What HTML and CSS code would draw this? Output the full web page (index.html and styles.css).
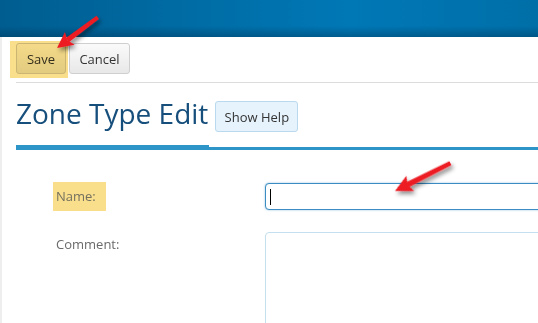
FILE: index.html
```html
<!DOCTYPE html>
<html lang="en">
<head>
    <meta charset="UTF-8">
    <meta name="viewport" content="width=device-width, initial-scale=1.0">
    <title>Zone Type Edit</title>
    <link rel="stylesheet" href="styles.css">
</head>
<body>

    <div class="topbar"></div>

    <div class="page">
        <!-- toolbar -->
        <div class="toolbar">
            <button class="btn" id="saveBtn">Save</button>
            <button class="btn" id="cancelBtn">Cancel</button>
            <span class="mark mark-save"></span>
        </div>

        <div class="title-row">
            <h1>Zone Type Edit</h1>
            <button class="btn btn-help">Show Help</button>
        </div>

        <form class="edit-form">
            <div class="form-row">
                <label class="form-label" for="zoneName"><span class="mark-text">Name:</span></label>
                <div class="field">
                    <input type="text" id="zoneName" class="text-input">
                    <span class="caret"></span>
                </div>
            </div>
            <div class="form-row">
                <label class="form-label form-label-top" for="zoneComment">Comment:</label>
                <div class="field">
                    <textarea id="zoneComment" class="text-area"></textarea>
                </div>
            </div>
        </form>
    </div>

    <!-- annotation arrows -->
    <svg class="arrows" width="538" height="323" viewBox="0 0 538 323">
        <defs>
            <filter id="shadow" x="-50%" y="-50%" width="200%" height="200%">
                <feDropShadow dx="2" dy="3" stdDeviation="2" flood-color="#000" flood-opacity="0.45"/>
            </filter>
        </defs>
        <g filter="url(#shadow)" fill="#ec1c24">
            <g transform="translate(57 48) rotate(143)">
                <polygon points="0,0 -16,-8 -13,0 -16,8"/>
                <polygon points="-13,-2.6 -51,-2 -51,2 -13,2.6"/>
            </g>
            <g transform="translate(395 191) rotate(153.4)">
                <polygon points="0,0 -17,-8.5 -14,0 -17,8.5"/>
                <polygon points="-14,-2.8 -62,-2.2 -62,2.2 -14,2.8"/>
            </g>
        </g>
    </svg>

</body>
</html>
```

FILE: styles.css
```css
body { margin: 0; font-family: "Open Sans", "Noto Sans", sans-serif; background: #fff; overflow: hidden; }
.topbar { height: 37px; background: linear-gradient(to bottom, rgba(0,0,0,0) 70%, rgba(0,40,70,0.35) 100%), linear-gradient(to right, #005d90 0%, #0070aa 45%, #0078b6 65%, #006fa8 100%); }
.page { border-left: 2px solid #eeeeee; padding-left: 14px; min-height: 290px; position: relative; }

.toolbar { display: flex; gap: 3px; padding: 6px 0 8px; border-bottom: 1px solid #dcdcdc; }
.btn { font-family: inherit; font-size: 13px; color: #333; background: linear-gradient(#fafafa, #e8e8e8); border: 1px solid #cfcfcf; border-radius: 3px; height: 31px; padding: 0 12px; cursor: pointer; }
#saveBtn { width: 50px; padding: 0; }
#cancelBtn { width: 61px; padding: 0; }
.mark { position: absolute; background: #f9df8c; mix-blend-mode: multiply; }
.mark-save { left: 8px; top: 4px; width: 58px; height: 37px; }

.title-row { display: flex; align-items: flex-start; gap: 6px; margin-top: 12px; border-bottom: 3px solid #2e95c8; }
h1 { margin: 0 0 -3px; font-size: 28px; line-height: 36px; font-weight: 400; color: #174f7c; padding: 0 1px 14px 0; border-bottom: 5px solid #2e95c8; }
.btn-help { margin-top: 6px; background: #e6f3fc; border-color: #b9d9ef; color: #333; width: 83px; padding: 0; }

.edit-form { padding-top: 33px; }
.form-row { display: flex; margin-bottom: 21px; }
.form-label { width: 209px; padding-left: 40px; font-size: 13px; color: #6a6a6a; line-height: 27px; flex-shrink: 0; }
.form-label-top { line-height: 24px; padding-top: 0; }
.mark-text { display: inline-block; background: #f9df8c; padding: 1px 10px 1px 3px; margin-left: -3px; margin-top: -3px; line-height: 27px; color: #73705e; }
.field { position: relative; flex: 1; }
.text-input { display: block; box-sizing: border-box; width: 300px; height: 27px; border: 1px solid #3a8cc2; border-radius: 4px; box-shadow: 0 0 2px rgba(58,140,194,0.6); outline: none; }
.caret { position: absolute; left: 5px; top: 6px; width: 1px; height: 16px; background: #000; }
.text-area { display: block; box-sizing: border-box; width: 300px; height: 120px; border: 1px solid #c4dfee; border-radius: 4px; resize: none; outline: none; }

.arrows { position: absolute; left: 0; top: 0; pointer-events: none; }
```
